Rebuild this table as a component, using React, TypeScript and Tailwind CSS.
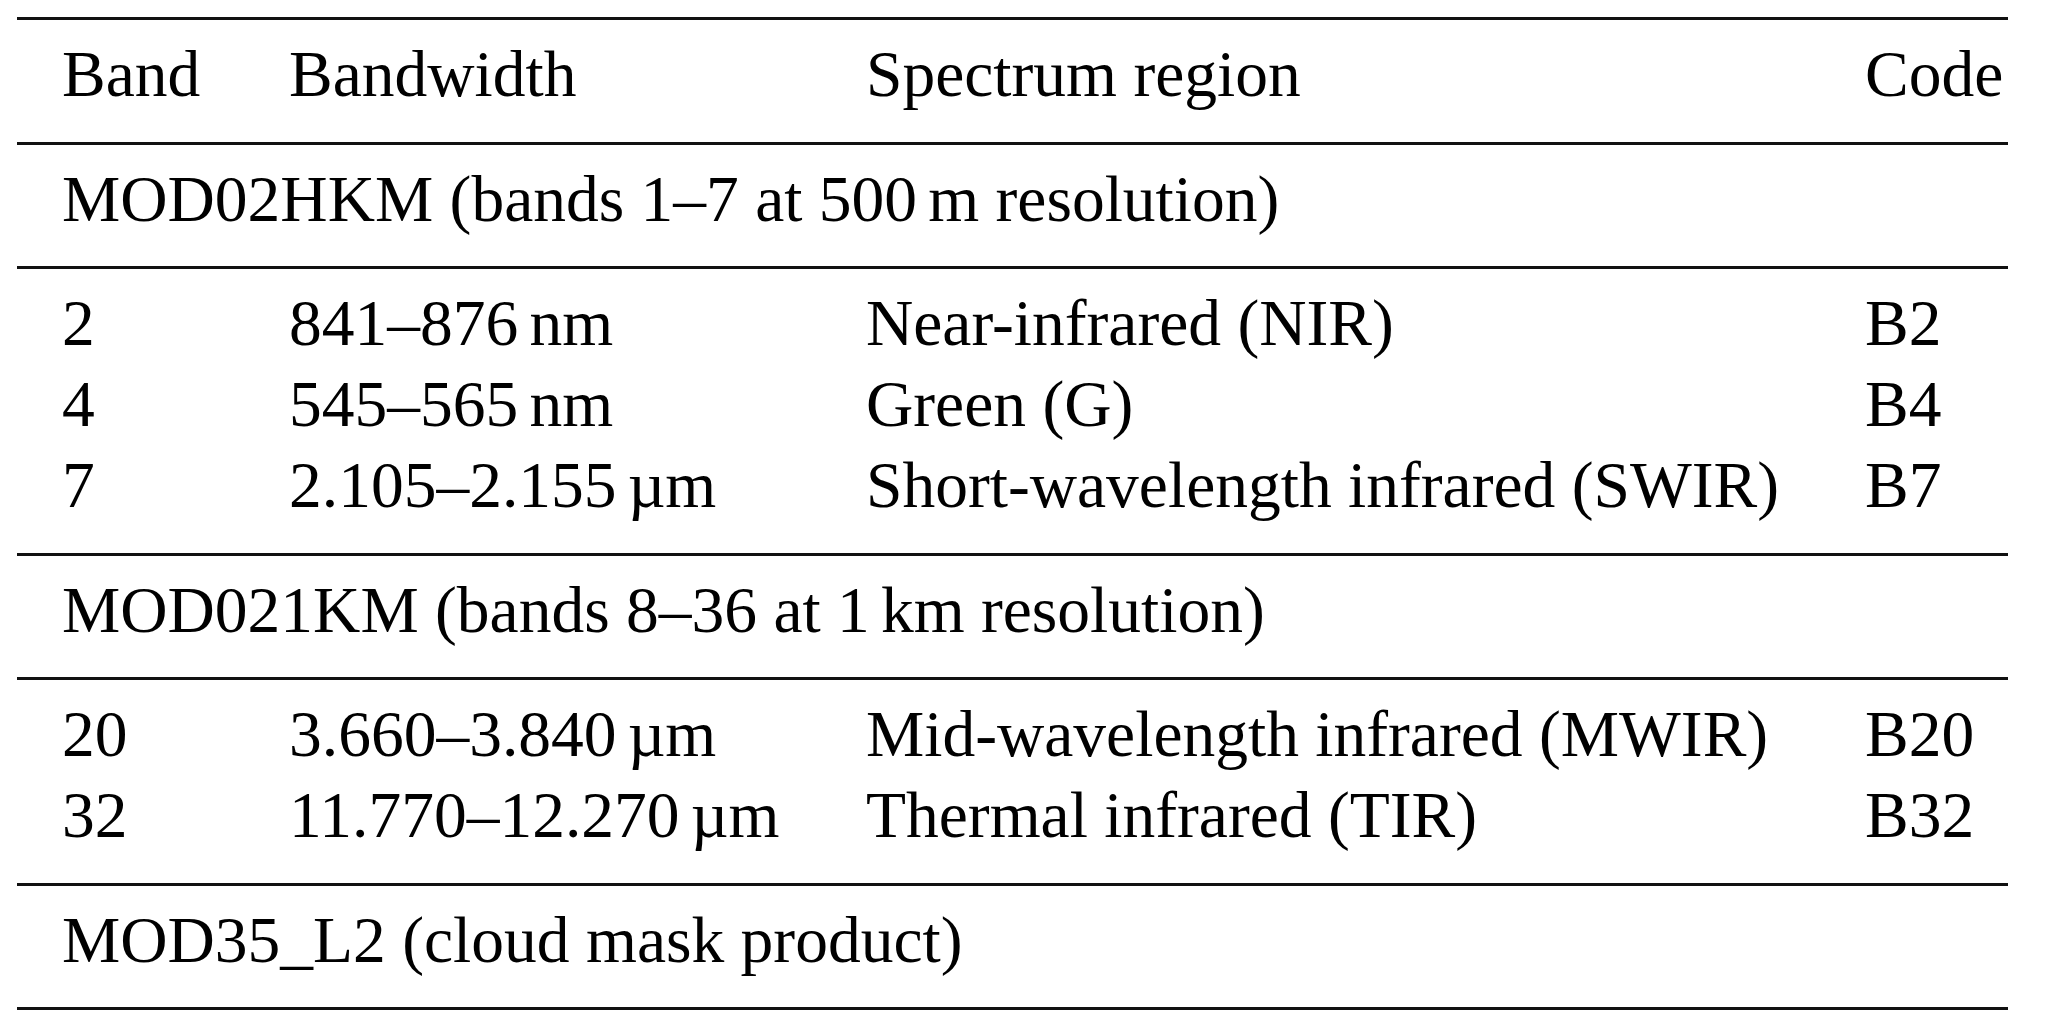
import React from "react";

const Rule = () => <div className="h-[3px] bg-[#111]" />;

const TS = () => <span className="inline-block w-[0.17em]" />;

type Row = [string, React.ReactNode, string, string];

const grid = "grid grid-cols-[227px_577px_999px_1fr] pl-[45px]";

function DataSection({ rows }: { rows: Row[] }) {
  return (
    <div className="pt-[14px] pb-[27px]">
      {rows.map((r, i) => (
        <div key={i} className={grid}>
          <div>{r[0]}</div>
          <div>{r[1]}</div>
          <div>{r[2]}</div>
          <div>{r[3]}</div>
        </div>
      ))}
    </div>
  );
}

function GroupTitle({ children }: { children: React.ReactNode }) {
  return <div className="pt-[14px] pb-[27px] pl-[45px]">{children}</div>;
}

export default function App() {
  return (
    <div className="w-[2067px] h-[1029px] bg-white text-black overflow-hidden">
      <div
        className="ml-[17px] w-[1991px] pt-[17px] text-[65.5px] leading-[80.7px] whitespace-nowrap"
        style={{ fontFamily: '"Liberation Serif", "Times New Roman", serif' }}
      >
        <Rule />
        <div className="pt-[14px] pb-[27px]">
          <div className={grid}>
            <div>Band</div>
            <div>Bandwidth</div>
            <div>Spectrum region</div>
            <div>Code</div>
          </div>
        </div>
        <Rule />
        <GroupTitle>
          MOD02HKM (bands 1–7 at 500<TS />m resolution)
        </GroupTitle>
        <Rule />
        <DataSection
          rows={[
            ["2", <>841–876<TS />nm</>, "Near-infrared (NIR)", "B2"],
            ["4", <>545–565<TS />nm</>, "Green (G)", "B4"],
            ["7", <>2.105–2.155<TS />µm</>, "Short-wavelength infrared (SWIR)", "B7"],
          ]}
        />
        <Rule />
        <GroupTitle>
          MOD021KM (bands 8–36 at 1<TS />km resolution)
        </GroupTitle>
        <Rule />
        <DataSection
          rows={[
            ["20", <>3.660–3.840<TS />µm</>, "Mid-wavelength infrared (MWIR)", "B20"],
            ["32", <>11.770–12.270<TS />µm</>, "Thermal infrared (TIR)", "B32"],
          ]}
        />
        <Rule />
        <GroupTitle>MOD35_L2 (cloud mask product)</GroupTitle>
        <Rule />
      </div>
    </div>
  );
}
